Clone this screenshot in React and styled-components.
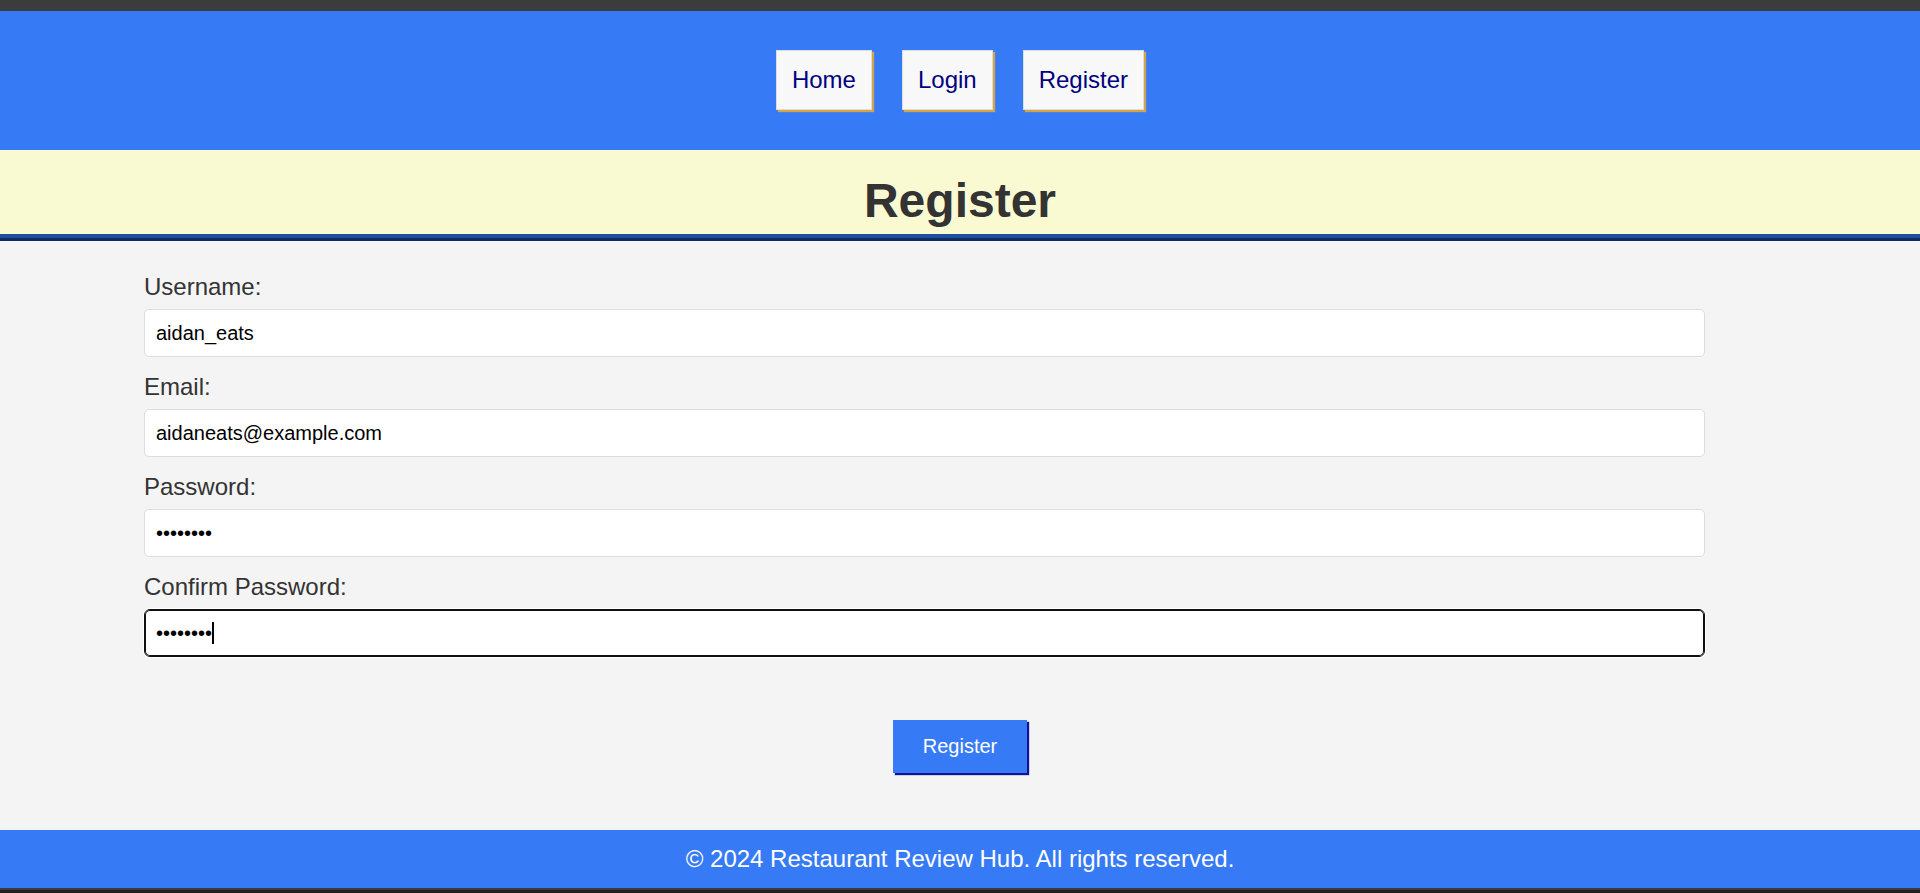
import React from 'react';
import styled, { createGlobalStyle } from 'styled-components';

const GlobalStyle = createGlobalStyle`
  html, body {
    margin: 0;
    padding: 0;
  }

  body {
    font-family: "Liberation Sans", Arial, sans-serif;
    background: #f4f4f4;
  }

  * {
    box-sizing: border-box;
  }
`;

const Page = styled.div`
  display: flex;
  flex-direction: column;
  min-height: 100vh;
`;

const WindowEdge = styled.div`
  height: ${props => props.bottom ? '5px' : '11px'};
  background: ${props => props.bottom ? '#212121' : '#3c3c3c'};
  border-top: ${props => props.bottom ? '2px solid #3a3a3a' : 'none'};
`;

const SiteHeader = styled.header`
  border-bottom: 3px solid #0f2c5e;
`;

const NavBar = styled.nav`
  background: #377af6;
  padding: 39px 0 40px;
  display: flex;
  justify-content: center;
  gap: 30px;
`;

const NavLink = styled.a`
  display: block;
  background: #f8f8f8;
  color: #000080;
  border: 1px solid #dddddd;
  padding: 15px;
  font-size: 24px;
  line-height: normal;
  text-decoration: none;
  box-shadow: 2px 2px 1px #d6a448;
  cursor: pointer;
`;

const TitleBand = styled.div`
  background: #fafad2;
  border-bottom: 4px solid #1f4fa0;
  padding: 23px 0 6px;
  text-align: center;
`;

const Title = styled.h1`
  margin: 0;
  font-size: 48px;
  font-weight: bold;
  line-height: normal;
  color: #333333;
`;

const Main = styled.main`
  flex: 1;
  background: #f4f4f4;
  padding-top: 32px;
`;

const Form = styled.form`
  width: 85%;
  margin: 0 auto;
`;

const Field = styled.div`
  margin-bottom: 16px;
`;

const Label = styled.label`
  display: block;
  font-size: 24px;
  line-height: normal;
  color: #333333;
  margin-bottom: 8px;
`;

const InputWrap = styled.div`
  position: relative;
  width: 95.65%;
`;

const Input = styled.input`
  display: block;
  width: 100%;
  height: 48px;
  padding: 0 11px;
  font-family: "Liberation Sans", Arial, sans-serif;
  font-size: 20px;
  color: #000000;
  background: #ffffff;
  border: 1px solid ${props => props.$focused ? '#101010' : '#dddddd'};
  border-radius: ${props => props.$focused ? '6px' : '5px'};
  box-shadow: ${props => props.$focused ? 'inset 0 0 0 1px #101010, 0 0 0 1px #ffffff' : 'none'};
  outline: none;
`;

const Caret = styled.span`
  position: absolute;
  left: 68px;
  top: 13px;
  width: 2px;
  height: 22px;
  background: #000000;
`;

const SubmitButton = styled.button`
  display: block;
  margin: 63px auto 0;
  padding: 15px 30px;
  font-family: "Liberation Sans", Arial, sans-serif;
  font-size: 20px;
  line-height: normal;
  color: #ffffff;
  background: #377af6;
  border: none;
  box-shadow: 2px 2px 1px #10109a;
  cursor: pointer;
`;

const Footer = styled.footer`
  background: #377af6;
  color: #ffffff;
  text-align: center;
  padding: 15px;
  font-size: 24px;
  line-height: normal;
`;

const fields = [
  { id: 'username', label: 'Username:', type: 'text', value: 'aidan_eats' },
  { id: 'email', label: 'Email:', type: 'email', value: 'aidaneats@example.com' },
  { id: 'password', label: 'Password:', type: 'password', value: 'password' },
  { id: 'confirm', label: 'Confirm Password:', type: 'password', value: 'password', focused: true },
];

const App = () => {
  return (
    <>
      <GlobalStyle />
      <Page>
        <WindowEdge />
        <SiteHeader>
          <NavBar>
            <NavLink>Home</NavLink>
            <NavLink>Login</NavLink>
            <NavLink>Register</NavLink>
          </NavBar>
          <TitleBand>
            <Title>Register</Title>
          </TitleBand>
        </SiteHeader>

        <Main>
          <Form onSubmit={(e) => e.preventDefault()}>
            {fields.map((field) => (
              <Field key={field.id}>
                <Label htmlFor={field.id}>{field.label}</Label>
                <InputWrap>
                  <Input
                    id={field.id}
                    type={field.type}
                    defaultValue={field.value}
                    $focused={field.focused}
                  />
                  {field.focused && <Caret />}
                </InputWrap>
              </Field>
            ))}
            <SubmitButton type="submit">Register</SubmitButton>
          </Form>
        </Main>

        <Footer>© 2024 Restaurant Review Hub. All rights reserved.</Footer>
        <WindowEdge bottom />
      </Page>
    </>
  );
};

export default App;
